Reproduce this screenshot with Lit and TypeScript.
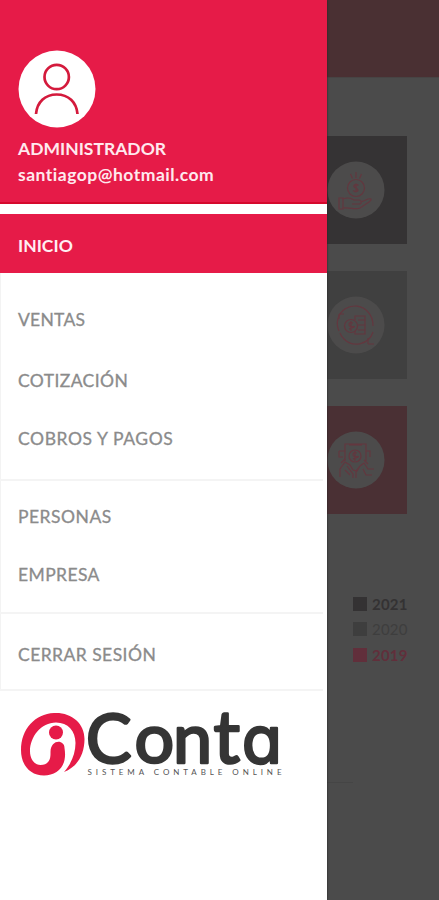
import { LitElement, html, svg, css } from "lit";
import { customElement } from "lit/decorators.js";
import { classMap } from "lit/directives/class-map.js";
import { styleMap } from "lit/directives/style-map.js";

interface Entry {
  label: string;
  height: number;
  shift: number;
  spacing: number;
  line?: boolean;
  active?: boolean;
}

const ENTRIES: Entry[] = [
  { label: "INICIO", height: 59, shift: 4, spacing: 0, active: true },
  { label: "VENTAS", height: 77, shift: 17, spacing: 0.25 },
  { label: "COTIZACIÓN", height: 61, shift: 1, spacing: 0.4 },
  { label: "COBROS Y PAGOS", height: 70, shift: -12, spacing: 0.6, line: true },
  { label: "PERSONAS", height: 65, shift: 6, spacing: 0.5 },
  { label: "EMPRESA", height: 68, shift: -8, spacing: 0.4, line: true },
  { label: "CERRAR SESIÓN", height: 77, shift: 6, spacing: 0.45, line: true },
];

const incomeIcon = svg`
  <path d="M29 11v6M23.500 13l2 4.500M34.500 13l-2 4.500"/>
  <circle cx="29" cy="27" r="8.500"/>
  <path d="M31.500 24.500q-2.500-2-4.500 0c-1.500 2 4.500 2.500 4 5q-2 2.200-4.800 0M29 22.500v9"/>
  <path d="M12 37h4v11h-4zM16 38c5-2 8-1 11 1h5c3 0 3 4 0 4h-7M34 41l7-3c4-1 4 1 1 3l-9 6c-5 2-10-1-17 0"/>`;
const flowIcon = svg`
  <path d="M12 35a17.500 17.500 0 0 1 29-19q5 5 5 14M46 36a17.500 17.500 0 0 1-29 7q-3-3-4-6"/>
  <path d="M12 23v-5M12 18h5M41 48v-6M41 48h6"/>
  <circle cx="24" cy="30" r="6.500"/><path d="M26 27q-4-1-4 1.500t4 2-4 2.500M24 25v10"/>
  <path d="M28 24v-4h10v18H28v-3M31 24h7M31 29h7M31 34h7"/>`;
const paymentIcon = svg`
  <path d="M18 16v-3h21v17M18 16v14M22 14h13M12 20h6M39 20h4v6M12 20v6h4"/>
  <circle cx="28" cy="25" r="6"/><path d="M30 22q-4-1-4 1.500t4 2-4 2.500M28 20v10"/>
  <path d="M13 46v-8l5-7 5 3 3 5 4 1 3-5 4-3 4 6h6M20 35l6 8v4M33 35l-4 5v7M18 39l5 5M36 38l3 6h6M14 32l4-4M37 29l4 4"/>`;

@customElement("app-root")
export class AppRoot extends LitElement {
  static styles = css`
    :host {
      display: block;
      position: relative;
      width: 439px;
      height: 900px;
      overflow: hidden;
      background: #4b4b4b;
      font-family: Lato, "Liberation Sans", sans-serif;
    }
    .page {
      display: flex;
      flex-direction: column;
      padding-left: 327px;
    }
    .bar {
      height: 78px;
      background: #4a3033;
      border-bottom: 1px solid #474444;
      box-sizing: border-box;
      margin-bottom: 58.400px;
    }
    .cards {
      display: flex;
      flex-direction: column;
      gap: 27px;
      width: 80px;
    }
    .card {
      height: 108px;
      display: flex;
      align-items: center;
    }
    .dark { background: #353334; }
    .gray { background: #404040; }
    .red { background: #4a3034; }
    .disc {
      width: 58px;
      height: 58px;
      fill: none;
      stroke: #63373f;
      stroke-width: 1.2;
    }
    .disc .base { fill: #4c4b4b; stroke: none; }
    .legend {
      display: flex;
      flex-direction: column;
      gap: 7px;
      margin: 80px 0 0 26px;
    }
    .year {
      display: flex;
      align-items: center;
      gap: 5px;
      height: 18.500px;
      font: 700 15px/18px Lato, sans-serif;
      letter-spacing: 0.2px;
    }
    .swatch { width: 14px; height: 14px; background: currentColor; }
    .y21 { color: #343233; }
    .y20 { color: #3e3e3e; font-weight: 400; }
    .y19 { color: #612f3b; }
    .axis {
      width: 26px;
      height: 1px;
      margin-top: 118px;
      background: #454545;
    }
    .drawer {
      position: absolute;
      inset: 0 auto 0 0;
      width: 327px;
      box-sizing: border-box;
      background: #fff;
      box-shadow: 0 0 2px #222;
    }
    .profile {
      height: 204px;
      box-sizing: border-box;
      padding: 50px 18px 0;
      background: #e61b48;
      border-bottom: 2px solid #d5082c;
      color: #ffe9ee;
      margin-bottom: 10px;
    }
    .avatar { display: block; width: 78px; height: 78px; }
    .name, .mail {
      font-weight: 700;
      font-size: 17.500px;
      line-height: 26px;
      white-space: nowrap;
    }
    .name { margin-top: 8px; }
    .mail { letter-spacing: 0.5px; }
    .entry {
      display: flex;
      align-items: center;
      box-sizing: border-box;
      padding-left: 17px;
      font-size: 17.500px;
      line-height: 24px;
      color: #8b8b8b;
      -webkit-text-stroke: 0.3px #8b8b8b;
      border-left: 1px solid #f3f3f3;
      margin-right: 4px;
      white-space: nowrap;
    }
    .line { border-bottom: 2px solid #f4f4f4; }
    .active {
      margin-right: 0;
      background: #e61b48;
      border-left: 0;
      padding-left: 18px;
      color: #ffeef2;
      font-weight: 700;
      -webkit-text-stroke: 0;
    }
    .logo { display: block; width: 280px; height: 80px; margin: 13px 0 0 10px; overflow: visible; }
    .word {
      font: 400 68px Lato, sans-serif;
      fill: #353535;
      stroke: #353535;
      stroke-width: 2.600px;
      stroke-linejoin: round;
    }
    .lower { font-size: 70px; }
    .stem { font-size: 74px; }
    .alpha { font-family: Inter, sans-serif; font-size: 65px; font-feature-settings: "cv11"; }
    .tag { font: 400 8px Lato, sans-serif; fill: #555; }
  `;

  render() {
    const disc = (icon: unknown) => html`
      <svg class="disc" viewBox="0 0 58 58"><circle class="base" cx="29" cy="29" r="28.500"/>${icon}</svg>`;
    return html`
      <div class="page">
        <div class="bar"></div>
        <div class="cards">
          <div class="card dark">${disc(incomeIcon)}</div>
          <div class="card gray">${disc(flowIcon)}</div>
          <div class="card red">${disc(paymentIcon)}</div>
        </div>
        <div class="legend">
          <div class="year y21"><span class="swatch"></span>2021</div>
          <div class="year y20"><span class="swatch"></span>2020</div>
          <div class="year y19"><span class="swatch"></span>2019</div>
        </div>
        <div class="axis"></div>
      </div>
      <div class="drawer">
        <div class="profile">
          <svg class="avatar" viewBox="0 0 78 78" fill="none" stroke="#d41a3c" stroke-width="2.700">
            <circle cx="39" cy="39" r="38.500" fill="#fff" stroke="none"/>
            <circle cx="38.700" cy="27" r="12.200"/>
            <path d="M18 64C19 52 27 44.500 38.700 44.500S58.500 52 59.500 64"/>
          </svg>
          <div class="name">ADMINISTRADOR</div>
          <div class="mail">santiagop@hotmail.com</div>
        </div>
        <nav>
          ${ENTRIES.map((e) => html`
            <div class=${classMap({ entry: true, line: !!e.line, active: !!e.active })}
              style=${styleMap({
                height: `${e.height}px`,
                paddingTop: `${Math.max(0, e.shift)}px`,
                paddingBottom: `${Math.max(0, -e.shift)}px`,
                letterSpacing: `${e.spacing}px`,
              })}>${e.label}</div>`)}
        </nav>
        <svg class="logo" viewBox="10 704 280 80">
          <path fill="#e61b48" fill-rule="evenodd" d="M54 713C71 712 84.500 723 84.500 739C84.500 755 77 767 64 772C71 764 75.500 754 75.500 743C75.500 731 68 722.500 56 722.500C41 722.500 30 737 30 751C30 760 35 765 40.500 765C48 765 50.500 760 50.500 754L50.500 752C50.500 739 64.500 739 64.500 748C65 752 65.500 755 64.500 760C62.500 770 54 775.500 44 775.500C30 775.500 21 765 21 750C21 729 35 714 54 713Z"/>
          <circle cx="56" cy="732.500" r="7" fill="#e61b48"/>
          <text class="word" y="763" x="86">C<tspan class="lower" x="134.500 173">on</tspan><tspan class="stem" x="213.500">t</tspan><tspan class="alpha" x="242">a</tspan></text>
          <text class="tag" x="87.500" y="774.500" textLength="194">SISTEMA CONTABLE ONLINE</text>
        </svg>
      </div>
    `;
  }
}
